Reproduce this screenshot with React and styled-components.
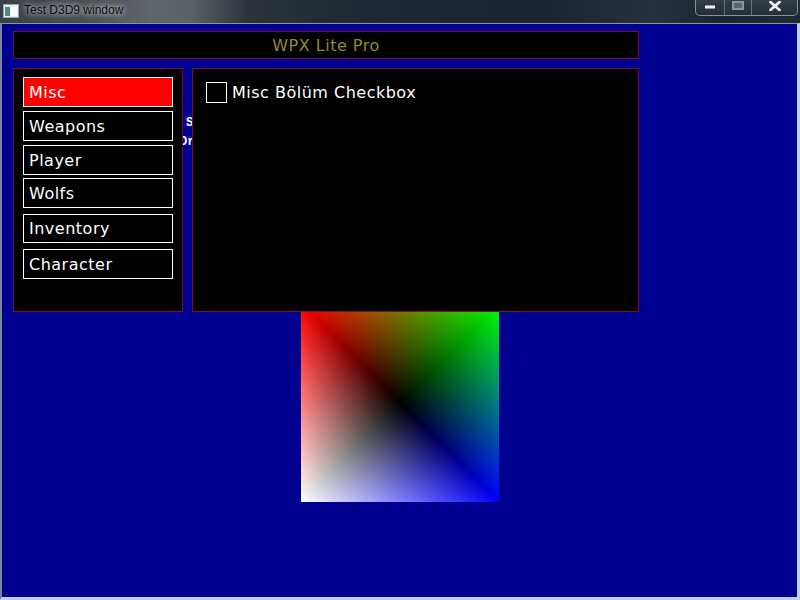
import React from 'react';
import styled, { createGlobalStyle } from 'styled-components';

const GlobalStyle = createGlobalStyle`
  html, body { margin: 0; padding: 0; width: 800px; height: 600px; overflow: hidden; background: #1b242d; }
  #root { width: 800px; height: 600px; }
`;

const Window = styled.div`
  width: 800px;
  height: 600px;
  display: flex;
  flex-direction: column;
  box-sizing: border-box;
  background: linear-gradient(90deg, #3a4047 0%, #474d54 10%, #60666c 19%, #5a6066 24%, #2c333b 31%, #1e2832 45%, #1a242e 68%, #27313b 82%, #1b252f 90%, #212b35 100%);
`;

const TitleBar = styled.div`
  height: 23px;
  display: flex;
  align-items: flex-start;
  flex-shrink: 0;
`;

const AppIcon = styled.svg`
  margin: 4px 0 0 3px;
  flex-shrink: 0;
`;

const TitleText = styled.div`
  margin: 3px 0 0 5px;
  font-family: "Liberation Sans", Arial, sans-serif;
  font-size: 12px;
  line-height: 15px;
  color: #0c0c0c;
  text-shadow: 0 0 5px rgba(255, 255, 255, 0.75), 0 0 9px rgba(255, 255, 255, 0.55);
`;

const CaptionGroup = styled.div`
  margin-left: auto;
  margin-right: 2px;
  height: 16px;
  display: flex;
  box-sizing: border-box;
  border: 1px solid rgba(190, 200, 212, 0.6);
  border-top: none;
  border-radius: 0 0 5px 5px;
  background: linear-gradient(#353e47, #252d35);
  overflow: hidden;
`;

const CaptionButton = styled.div`
  width: ${p => p.$w}px;
  box-sizing: border-box;
  display: flex;
  justify-content: center;
  align-items: flex-start;
  padding-top: ${p => p.$top}px;
  & + & { border-left: 1px solid rgba(190, 200, 212, 0.4); }
`;

const Client = styled.div`
  flex: 1;
  position: relative;
  overflow: hidden;
  background: #000090;
  border-top: 1px solid #8b96a2;
  border-left: 2px solid #76859a;
  border-right: 3px solid #c3cfdf;
  border-bottom: 3px solid #c3cfdf;
`;

const Scene = styled.div`
  position: absolute;
  inset: 0;
  z-index: 0;
`;

const Quad = styled.svg`
  position: absolute;
  left: 299px;
  top: 280px;
  width: 198px;
  height: 198px;
  isolation: isolate;
`;

const Layer = styled.rect`
  mix-blend-mode: lighten;
`;

const DebugLine = styled.div`
  position: absolute;
  left: ${p => p.$x}px;
  top: ${p => p.$y}px;
  font-family: "Liberation Mono", "DejaVu Sans Mono", monospace;
  font-weight: bold;
  font-size: 12px;
  line-height: 14px;
  color: #fff;
  white-space: pre;
`;

const Overlay = styled.div`
  position: relative;
  z-index: 1;
  padding: 7px 0 0 11px;
  display: flex;
  flex-direction: column;
  gap: 9px;
  font-family: "DejaVu Sans", Verdana, sans-serif;
  font-size: 16px;
  letter-spacing: 0.5px;
`;

const Header = styled.div`
  width: 626px;
  height: 28px;
  box-sizing: border-box;
  border: 1px solid #7c0a3c;
  background: #000;
  color: #8e8e22;
  display: flex;
  align-items: center;
  justify-content: center;
`;

const PanelRow = styled.div`
  display: flex;
  gap: 9px;
  width: 626px;
  height: 244px;
`;

const Panel = styled.div`
  box-sizing: border-box;
  border: 1px solid #7c0a3c;
  background: #000;
  display: flex;
  flex-direction: column;
  align-items: flex-start;
`;

const MenuPanel = styled(Panel)`
  width: 170px;
  padding: 8px 0 0 9px;
`;

const ContentPanel = styled(Panel)`
  flex: 1;
  padding: 13px 0 0 13px;
`;

const MenuButton = styled.div`
  width: 150px;
  height: ${p => p.$h}px;
  margin-top: ${p => p.$mt}px;
  box-sizing: border-box;
  border: 1px solid ${p => (p.$active ? '#f2f2f2' : '#ffffff')};
  background: ${p => (p.$active ? '#ff0000' : '#000')};
  color: #fff;
  padding-left: 5px;
  display: flex;
  align-items: center;
`;

const CheckRow = styled.div`
  display: flex;
  align-items: center;
  gap: 5px;
  color: #fff;
`;

const CheckBox = styled.div`
  width: 21px;
  height: 21px;
  box-sizing: border-box;
  border: 1px solid #fff;
`;

const menu = [
  { label: 'Misc', mt: 0, h: 30, active: true },
  { label: 'Weapons', mt: 4, h: 30 },
  { label: 'Player', mt: 4, h: 30 },
  { label: 'Wolfs', mt: 3, h: 30 },
  { label: 'Inventory', mt: 6, h: 29 },
  { label: 'Character', mt: 6, h: 30 },
];

const gradients = [
  { id: 'r1', c: '#ff0000', x1: 0, y1: 0, x2: 0.5, y2: 0 },
  { id: 'r2', c: '#ff0000', x1: 0, y1: 0, x2: 0.5, y2: 0.5 },
  { id: 'w1', c: '#ffffff', x1: 0, y1: 1, x2: 0.5, y2: 0.5 },
  { id: 'g1', c: '#00ff00', x1: 1, y1: 0, x2: 0.5, y2: 0.5 },
  { id: 'b1', c: '#0000ff', x1: 0.5, y1: 1, x2: 0.5, y2: 0.5 },
  { id: 'b2', c: '#0000ff', x1: 1, y1: 1, x2: 0.5, y2: 0.5 },
];

function ColorQuad() {
  return (
    <Quad viewBox="0 0 1 1" preserveAspectRatio="none">
      <defs>
        {gradients.map(g => (
          <linearGradient key={g.id} id={g.id} gradientUnits="userSpaceOnUse" x1={g.x1} y1={g.y1} x2={g.x2} y2={g.y2}>
            <stop offset="0" stopColor={g.c} />
            <stop offset="1" stopColor="#000" />
          </linearGradient>
        ))}
      </defs>
      <rect x="0" y="0" width="1" height="1" fill="#000" />
      {gradients.map(g => (
        <Layer key={g.id} x="0" y="0" width="1" height="1" fill={`url(#${g.id})`} />
      ))}
    </Quad>
  );
}

export default function App() {
  return (
    <>
      <GlobalStyle />
      <Window>
        <TitleBar>
          <AppIcon width="16" height="14" viewBox="0 0 16 14">
            <rect x="0.5" y="0.5" width="15" height="13" fill="#e8eef2" stroke="#9aa6ae" />
            <rect x="2" y="3" width="5" height="9" fill="#4c8a86" />
            <rect x="8" y="3" width="6" height="9" fill="#ffffff" />
          </AppIcon>
          <TitleText>Test D3D9 window</TitleText>
          <CaptionGroup>
            <CaptionButton $w={28} $top={5}>
              <svg width="10" height="4" viewBox="0 0 10 4">
                <rect x="0" y="0.5" width="10" height="3" fill="#f4f4f4" />
              </svg>
            </CaptionButton>
            <CaptionButton $w={27} $top={1}>
              <svg width="12" height="9" viewBox="0 0 12 9">
                <rect x="1" y="1" width="10" height="7" fill="#5a636b" stroke="#8c949b" strokeWidth="2" />
              </svg>
            </CaptionButton>
            <CaptionButton $w={46} $top={1}>
              <svg width="12" height="10" viewBox="0 0 12 10">
                <path d="M1.5 1 L10.5 9 M10.5 1 L1.5 9" stroke="#f4f4f4" strokeWidth="2.6" strokeLinecap="square" />
              </svg>
            </CaptionButton>
          </CaptionGroup>
        </TitleBar>
        <Client>
          <Scene>
            <ColorQuad />
            <DebugLine $x={184} $y={92}>Sprite test</DebugLine>
            <DebugLine $x={178} $y={111}>Draw count</DebugLine>
          </Scene>
          <Overlay>
            <Header>WPX Lite Pro</Header>
            <PanelRow>
              <MenuPanel>
                {menu.map(m => (
                  <MenuButton key={m.label} $active={m.active} $mt={m.mt} $h={m.h}>
                    {m.label}
                  </MenuButton>
                ))}
              </MenuPanel>
              <ContentPanel>
                <CheckRow>
                  <CheckBox />
                  <span>Misc Bölüm Checkbox</span>
                </CheckRow>
              </ContentPanel>
            </PanelRow>
          </Overlay>
        </Client>
      </Window>
    </>
  );
}
